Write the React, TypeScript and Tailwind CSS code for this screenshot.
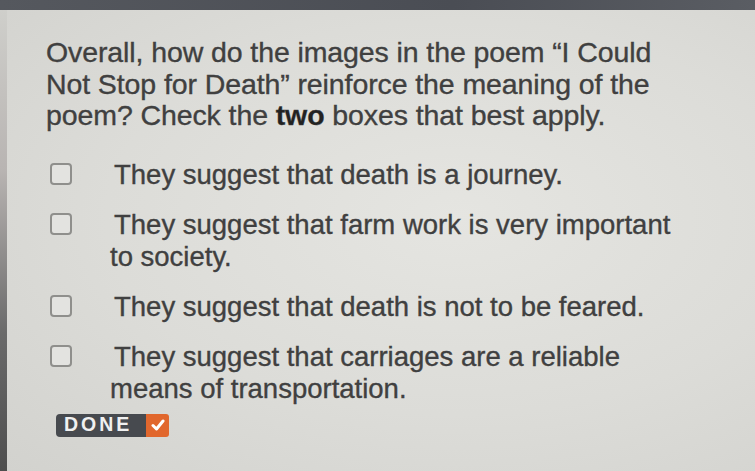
import React from "react";

const Box = () => (
  <div className="mt-[4px] h-[22px] w-[22px] shrink-0 rounded-[4px] border-2 border-[#8f8f8c] bg-[#e3e3e0]" />
);

const options: string[][] = [
  ["They suggest that death is a journey."],
  ["They suggest that farm work is very important", "to society."],
  ["They suggest that death is not to be feared."],
  ["They suggest that carriages are a reliable", "means of transportation."],
];

export default function App() {
  return (
    <div
      className="flex h-[471px] w-[755px] flex-col overflow-hidden bg-[#d8d8d4] text-[#404040] [-webkit-text-stroke:0.35px_#404040]"
      style={{ fontFamily: '"Liberation Sans", Arial, sans-serif' }}
    >
      <div className="h-[10px] w-full shrink-0 bg-[linear-gradient(90deg,#55585e,#4a4d54_60%,#5a5d63)]" />
      <div className="flex flex-1">
        <div className="w-[7px] shrink-0 bg-[linear-gradient(180deg,#cfcfcb_0%,#b8b4b2_35%,#6a6a6a_70%,#4e4e4e_100%)]" />
        <div className="flex-1 bg-[radial-gradient(ellipse_at_60%_45%,#e5e5e1_0%,#dcdcd8_55%,#d2d2ce_100%)] pl-[39px] pt-[27px]">
          <div className="text-[28.5px] leading-[31.5px] tracking-[-0.1px]">
            <div>Overall, how do the images in the poem “I Could</div>
            <div>Not Stop for Death” reinforce the meaning of the</div>
            <div>
              poem? Check the <span className="font-bold text-[#222]">two</span> boxes that best apply.
            </div>
          </div>
          <div className="mt-[27px] flex flex-col gap-[18px] text-[27.5px] leading-[32px]">
            {options.map((lines, i) => (
              <div key={i} className="flex items-start pl-[4px]">
                <Box />
                <div className="ml-[42px]">
                  {lines.map((l, j) => (
                    <div key={j} className={j > 0 ? "-ml-[4px]" : ""}>
                      {l}
                    </div>
                  ))}
                </div>
              </div>
            ))}
          </div>
          <div className="ml-[10px] mt-[9px] flex h-[23px] w-fit items-stretch [-webkit-text-stroke:0px]">
            <div className="flex items-center rounded-l-[4px] bg-[#474a4f] pl-[8px] pr-[14px] text-[19.5px] font-bold tracking-[3px] text-[#f0f0f0]">
              DONE
            </div>
            <div className="flex w-[23px] items-center justify-center rounded-r-[3px] bg-[#e1672d]">
              <svg width="14" height="12" viewBox="0 0 14 12">
                <path d="M2 6.5 L5.5 10 L12 2" stroke="#fff" strokeWidth="3" fill="none" strokeLinecap="round" strokeLinejoin="round" />
              </svg>
            </div>
          </div>
        </div>
      </div>
    </div>
  );
}
